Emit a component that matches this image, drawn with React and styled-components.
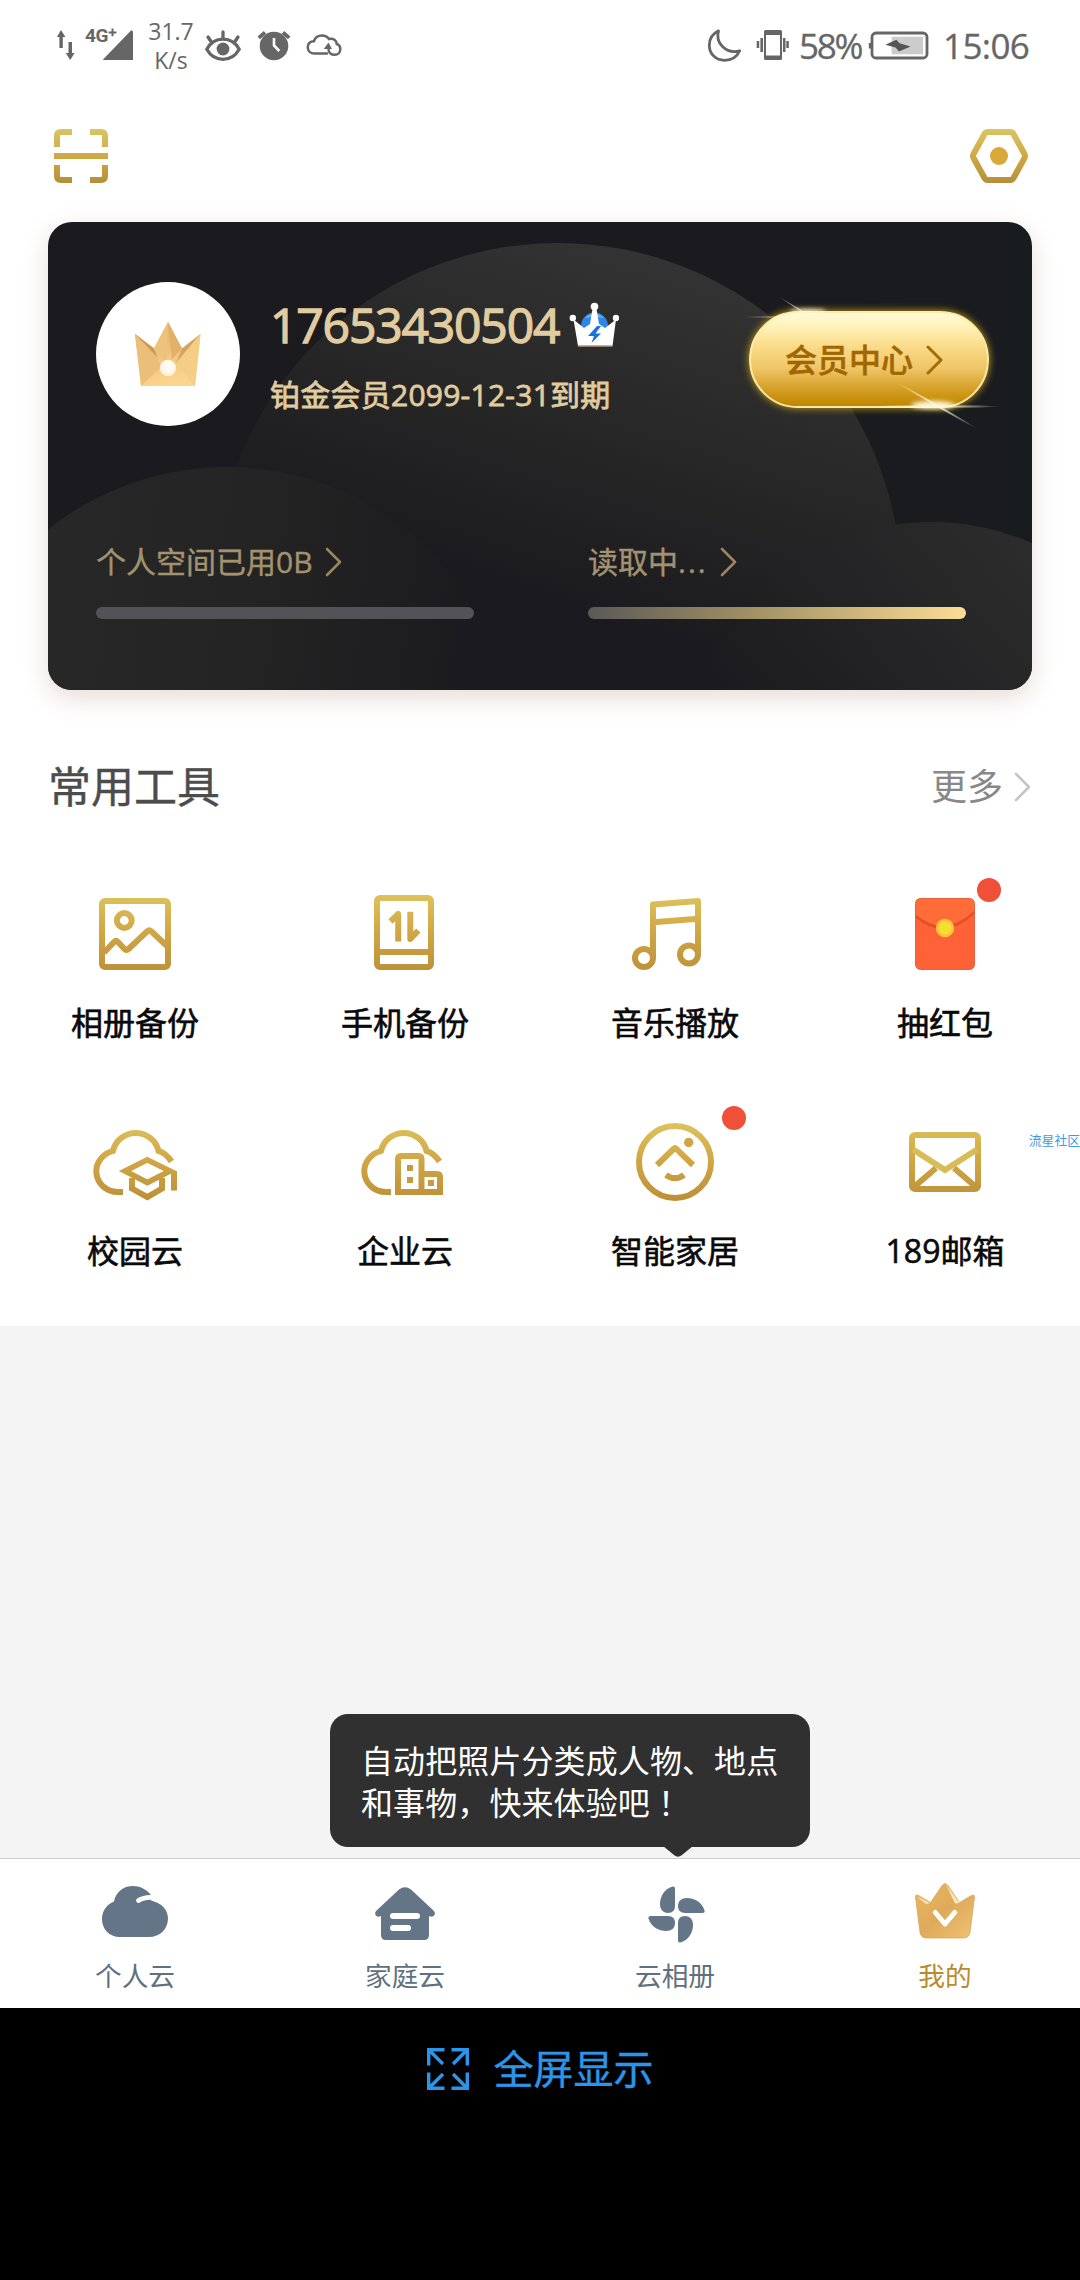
import React from "react";
import styled, { createGlobalStyle } from "styled-components";

const GlobalStyle = createGlobalStyle`
    * {
        box-sizing: border-box;
    }
    body {
        margin: 0;
        background: #000;
        font-family: "Open Sans", "Noto Sans CJK SC", sans-serif;
    }
    svg {
        display: block;
        flex-shrink: 0;
    }
`;

const GoldDefs = () => (
    <DefsSvg width="0" height="0">
        <defs>
            <linearGradient id="gold" gradientUnits="userSpaceOnUse" x1="0" y1="22" x2="0" y2="98">
                <stop offset="0" stopColor="#dcc25c" />
                <stop offset="0.5" stopColor="#d0a544" />
                <stop offset="1" stopColor="#bd9038" />
            </linearGradient>
            <linearGradient id="goldSmall" gradientUnits="userSpaceOnUse" x1="0" y1="0" x2="0" y2="54">
                <stop offset="0" stopColor="#dac463" />
                <stop offset="0.5" stopColor="#cfa945" />
                <stop offset="1" stopColor="#b58f38" />
            </linearGradient>
        </defs>
    </DefsSvg>
);

const Chevron = ({ width, height, color, stroke = 2.6 }) => (
    <svg width={width} height={height} fill="none" stroke={color} strokeWidth={stroke} strokeLinecap="round" strokeLinejoin="round">
        <path d={`M2 2L${width - 2} ${height / 2}L2 ${height - 2}`} />
    </svg>
);

const StatusBar = () => (
    <StatusBarBlock>
        <StatusGroup>
            <svg width="18" height="36" fill="#666">
                <path d="M4 2L8.4 9H5.8V20H2.4V9H-.2Z" />
                <path d="M13.2 32L8.8 25H11.5V14H15V25H17.6Z" />
            </svg>
            <StatusItem $left={8}>
                <svg width="51" height="52" viewBox="-2 -8 51 52" fill="#666">
                    <path d="M18 31.5L46 2.5Q48 2 48 4V32H18.5Z" />
                    <text x="0" y="14" fontFamily="Roboto" fontWeight="700" fontSize="19" letterSpacing="-0.3">4G</text>
                    <path d="M23.6 4.4H31.4M27.5 .5V8.3" stroke="#666" strokeWidth="2" />
                </svg>
            </StatusItem>
            <NetSpeed>
                <span>31.7</span>
                <span>K/s</span>
            </NetSpeed>
            <StatusItem $left={10}>
                <svg width="36" height="36" fill="none" stroke="#666" strokeWidth="3.3" strokeLinecap="round">
                    <path d="M1.8 21.3C5.5 14.5 11.3 11.2 18 11.2S30.5 14.5 34.2 21.3C30.5 28 24.7 31.3 18 31.3S5.5 28 1.8 21.3Z" />
                    <circle cx="18" cy="21" r="6.4" fill="#666" stroke="none" />
                    <path d="M18 4V10M3 9L6 13.5M33 9L30 13.5" />
                </svg>
            </StatusItem>
            <StatusItem $left={16}>
                <svg width="34" height="36" fill="none">
                    <circle cx="17" cy="18" r="14.3" fill="#666" />
                    <path d="M1.8 9.8L8 4.3M32.2 9.8L26 4.3" stroke="#666" strokeWidth="3.6" />
                    <path d="M17 10V17.5L22.3 23" stroke="#fff" strokeWidth="2.6" />
                </svg>
            </StatusItem>
            <StatusItem $left={15}>
                <svg width="36" height="36" fill="none" stroke="#666" strokeWidth="2.5" strokeLinecap="round">
                    <path d="M21 25.5H8.500C4.5 25.5 1.7 23 1.7 19.3C1.7 15.5 4.5 13 8 13.2C9 9.5 12 7.5 16 7.5C19 7.5 21.5 8.8 23 11C27.5 10 30.5 12.5 30.8 16C33.5 16.8 34.3 19 34.3 21C34.3 24.5 32 26.8 28.8 26.8C25 26.8 22.5 24.5 22.5 21V18" />
                    <path d="M17.8 21L22.5 14.5L26 21Z" fill="#666" stroke="none" />
                </svg>
            </StatusItem>
        </StatusGroup>
        <StatusGroup>
            <svg width="36" height="36" fill="none" stroke="#666" strokeWidth="2.8" strokeLinejoin="round">
                <path d="M11.5 2.8C5 6 2.3 11 2.3 17.2C2.3 26 9 32.3 17.5 32.3C24.5 32.3 30 29 32.7 22.8C26.5 24.5 20 23 15.5 18.5C11 14 10 8 11.5 2.8Z" />
            </svg>
            <StatusItem $left={13}>
                <svg width="34" height="36" fill="#666">
                    <path fillRule="evenodd" d="M9.5 2H24.5Q26 2 26 3.5V30.5Q26 32 24.5 32H9.5Q8 32 8 30.5V3.5Q8 2 9.5 2ZM10 7V27.5H24V7Z" />
                    <path d="M4.4 10H7V24H4.4ZM.7 13H3.2V20H.7ZM27 10H29.5V24H27ZM30.3 13H32.8V20H30.3Z" />
                </svg>
            </StatusItem>
            <StatusText $width={62} $left={9} $spacing={-2.2}>58%</StatusText>
            <StatusItem $left={7}>
                <svg width="61" height="36">
                    <rect x="4" y="5" width="55" height="25" rx="4" fill="#fff" stroke="#666" strokeWidth="2.8" />
                    <path d="M.8 15H3V20.5H.8Z" fill="#666" />
                    <rect x="23.6" y="8.7" width="31.5" height="17.6" fill="#ccc" />
                    <path d="M17.4 16.8L28.4 11.7L31.5 15.3L42.5 18.5L31 23.5L27.5 19.5Z" fill="#555" />
                </svg>
            </StatusItem>
            <StatusText $width={86} $left={14} $spacing={-0.6}>15:06</StatusText>
        </StatusGroup>
    </StatusBarBlock>
);

const ScanIcon = () => (
    <svg width="54" height="54" fill="none" stroke="url(#goldSmall)" strokeWidth="6">
        <path d="M3 18V7Q3 3 7 3H18M36 3H47Q51 3 51 7V18M51 36V47Q51 51 47 51H36M18 51H7Q3 51 3 47V36M0 27H54" />
    </svg>
);

const SettingIcon = () => (
    <svg width="58" height="54" fill="none">
        <path
            d="M17.5 3H40.5Q42.5 3 43.5 5L54.5 25Q55.5 27 54.5 29L43.5 49Q42.5 51 40.5 51H17.5Q15.5 51 14.5 49L3.5 29Q2.5 27 3.5 25L14.5 5Q15.5 3 17.5 3Z"
            stroke="url(#goldSmall)"
            strokeWidth="6"
        />
        <circle cx="29" cy="27" r="9" fill="#d8a838" />
    </svg>
);

const CardBackdrop = () => (
    <Backdrop viewBox="48 222 984 468">
        <defs>
            <linearGradient id="orbTop" x1="0.58" y1="0" x2="0.42" y2="0.5">
                <stop offset="0" stopColor="#333" />
                <stop offset="0.5" stopColor="#272727" />
                <stop offset="1" stopColor="#1b1a1e" />
            </linearGradient>
            <linearGradient id="orbLeft" x1="0.15" y1="0" x2="0.95" y2="0.1">
                <stop offset="0" stopColor="#282828" />
                <stop offset="0.5" stopColor="#242424" />
                <stop offset="1" stopColor="#1b1a1e" />
            </linearGradient>
            <linearGradient id="orbRight" x1="0.65" y1="0" x2="0.15" y2="0.45">
                <stop offset="0" stopColor="#2c2c2c" />
                <stop offset="1" stopColor="#1b1a1e" />
            </linearGradient>
        </defs>
        <circle cx="558" cy="586" r="343" fill="url(#orbTop)" />
        <circle cx="227" cy="755" r="288" fill="url(#orbLeft)" />
        <circle cx="932" cy="768" r="246" fill="url(#orbRight)" />
    </Backdrop>
);

const AvatarCrown = () => (
    <svg width="68" height="66" viewBox="134 320 68 66">
        <defs>
            <linearGradient id="crownFace" x1="0" y1="0" x2="0.3" y2="1">
                <stop offset="0" stopColor="#dfaa62" />
                <stop offset="1" stopColor="#fbd58d" />
            </linearGradient>
        </defs>
        <path d="M135 333L154 347.5L168 321L182 347.5L200.5 333L195 385H141Z" fill="url(#crownFace)" />
        <path d="M135 333L154 347.5L161 366L141 385Z" fill="#ebbf77" />
        <path d="M135 333L154 347.5L157 356Z" fill="#cf9955" />
        <path d="M168 321L182 347.5L172 358Z" fill="#e2b069" />
        <path d="M168 321L154 347.5L166 362Z" fill="#edc27b" />
        <path d="M200.5 333L182 347.5L176 362Z" fill="#d2a461" />
        <path d="M200.5 333L176 362L195 385Z" fill="#f6cd84" />
        <circle cx="168" cy="367" r="8.2" fill="#fdf1dc" />
        <circle cx="168" cy="365.5" r="6.5" fill="#fffaf0" />
    </svg>
);

const PlatinumBadge = () => (
    <svg width="50" height="46" viewBox="570 302 50 46">
        <circle cx="595.5" cy="326" r="13.500" fill="#2f86e6" />
        <path d="M586 318Q595 309 605 318L598 317H592Z" fill="#69b5f7" />
        <path d="M593.5 309H597.5L600 324L606 328L617 319.5L613.5 346H579L574.5 319.5L585 328L591 324Z" fill="#fff" />
        <path d="M579 346H613.5" stroke="#b8957c" strokeWidth="1.5" />
        <circle cx="595.5" cy="306.5" r="3.8" fill="#fff" />
        <circle cx="573.8" cy="318" r="3.2" fill="#fff" />
        <circle cx="617" cy="318" r="3.2" fill="#fff" />
        <path d="M598 326L589 336H595L592.5 343L602 333.5H596.5L602 326Z" fill="#1674e0" />
    </svg>
);

const ButtonSparks = () => (
    <Sparks viewBox="729 291 280 143">
        <defs>
            <filter id="soft" x="-50%" y="-300%" width="200%" height="700%">
                <feGaussianBlur stdDeviation="2.2" />
            </filter>
            <radialGradient id="ray">
                <stop offset="0" stopColor="#fff8dc" />
                <stop offset="1" stopColor="#fff8dc" stopOpacity="0" />
            </radialGradient>
        </defs>
        <g fill="#fff8d8" filter="url(#soft)">
            <ellipse cx="808" cy="311" rx="18" ry="2" />
            <ellipse cx="933" cy="405" rx="22" ry="4" />
        </g>
        <g fill="url(#ray)">
            <ellipse cx="935" cy="406.5" rx="65" ry="2" />
            <ellipse cx="936" cy="405" rx="46" ry="1.6" transform="rotate(30 936 405)" />
            <ellipse cx="780" cy="317" rx="40" ry="1.2" opacity="0.5" />
            <ellipse cx="800" cy="310" rx="24" ry="1.2" opacity="0.7" transform="rotate(32 800 310)" />
        </g>
    </Sparks>
);

const PhotoIcon = () => (
    <GoldIcon>
        <rect x="27" y="27" width="66" height="66" rx="3" />
        <circle cx="49.3" cy="46.5" r="7.4" />
        <path d="M29 78.5L39 68Q41 66 43 68L49.5 75Q51.5 77 53.5 75L72 57.5Q74.3 55.5 76.5 57.5L92 72" />
    </GoldIcon>
);

const PhoneIcon = () => (
    <GoldIcon>
        <rect x="32" y="24" width="54" height="69" rx="3" />
        <path d="M32 78H86" />
        <path d="M45.5 47.5L53.2 40V67.5M65.3 37.7V65L73.3 56.5" strokeLinejoin="round" />
    </GoldIcon>
);

const MusicIcon = () => (
    <GoldIcon>
        <circle cx="29" cy="84" r="9" />
        <circle cx="74" cy="80.5" r="9" />
        <path d="M38 84V30.5L83 27V80.5M38 48.3L83 44.8" strokeLinejoin="round" />
    </GoldIcon>
);

const RedPacketIcon = () => (
    <svg width="120" height="120">
        <rect x="30.5" y="24.5" width="59" height="71" rx="5" fill="#ff6237" stroke="#e8613f" />
        <path d="M31 44Q60 68 89 40V29Q89 25 85 25H35Q31 25 31 29Z" fill="#e2502c" />
        <path d="M31 41Q60 64 89 37V29Q89 25 85 25H35Q31 25 31 29Z" fill="#ff6c38" />
        <circle cx="60" cy="54" r="9.2" fill="#f6c53a" />
        <circle cx="60" cy="54" r="6.5" fill="#f8dc30" />
    </svg>
);

const cloudPath = "M96.5 59.5Q91 51 83.5 48.8A23.4 23.4 0 0 0 38 48.8C28 51.5 21.3 60 21.3 69C21.3 81 31 90 43 90H48";

const CampusIcon = () => (
    <GoldIcon>
        <path d={cloudPath} />
        <path d="M50 69L72.3 57.8L95 69L72.3 80.5Z" strokeWidth="5.6" />
        <path d="M57 76V86.5L72.3 95L87 86.5V76M99 69V88.5" />
    </GoldIcon>
);

const CompanyIcon = () => (
    <GoldIcon>
        <path d={cloudPath} transform="translate(-2 0)" />
        <path d="M53 90V57Q53 54 56 54H73.5Q76.5 54 76.5 57V90ZM76.5 72H92Q95 72 95 75V90H76.5" />
        <path d="M62 63H68V69H62ZM62 75H68V81H62ZM83 78H89V84H83Z" fill="#c99a40" stroke="none" />
    </GoldIcon>
);

const SmartHomeIcon = () => (
    <GoldIcon>
        <circle cx="60" cy="60" r="36" />
        <path d="M42 63L58.5 47Q60 45.5 61.5 47L78 63M51 72.8Q60 79.5 69 72.8" />
        <circle cx="73.7" cy="40.5" r="4.7" fill="#d0a544" stroke="none" />
    </GoldIcon>
);

const MailIcon = () => (
    <GoldIcon>
        <rect x="27" y="33" width="66" height="54" rx="3" />
        <path d="M29 85L51 66M91 85L69 66" />
        <path d="M28 47.5L60 68L92 47.5" stroke="#d8bc55" />
    </GoldIcon>
);

const CloudTabIcon = () => (
    <svg width="80" height="80">
        <path
            d="M25 65C14 65 7 57 7 47C7 39 12 32 19 29.5C21 20 28 14 38 14C45 14 51 17 55.5 22.5L56 28.5C67 31 73 38 73 46.5C73 57 65 65 54 65Z"
            fill="#637587"
        />
        <path d="M43.5 28.5Q49.5 24.500 59 25.5" fill="none" stroke="#fff" strokeWidth="4.8" strokeLinecap="round" />
    </svg>
);

const HomeTabIcon = () => (
    <svg width="80" height="80">
        <path
            d="M34 17.5Q40 12.8 46 17.5L69 39Q71 42 68.5 44Q66.5 45.5 64 44V63Q64 68 59 68H21Q16 68 16 63V44Q13.5 45.5 11.5 44Q9 42 11 39Z"
            fill="#637587"
        />
        <path d="M28 44H52M28 56H43" stroke="#fff" strokeWidth="6" strokeLinecap="round" />
    </svg>
);

const AlbumTabIcon = () => (
    <svg width="80" height="80" fill="#637587">
        {[0, 90, 180, 270].map((angle) => (
            <path
                key={angle}
                d="M40 16.5Q40 14 37.5 14.5C29 17 25 25 25 32C25 37.5 28 41 33 41Q40 41 40 34Z"
                transform={`rotate(${angle} 41.5 42.5)`}
            />
        ))}
    </svg>
);

const MineTabIcon = () => (
    <svg width="80" height="80">
        <defs>
            <linearGradient id="mineCrown" x1="0" y1="0" x2="1" y2="1">
                <stop offset="0" stopColor="#ecb862" />
                <stop offset="0.5" stopColor="#dea95a" />
                <stop offset="1" stopColor="#f0c374" />
            </linearGradient>
        </defs>
        <path
            d="M10.5 25Q10.5 22 13.5 23.5L25.5 30.5L37.5 13Q40 10 42.5 13L54.5 30.5L66.5 23.5Q69.5 22 69.5 25L65 60.5Q64 66 58.5 66H21.5Q16 66 15 60.5Z"
            fill="url(#mineCrown)"
            stroke="#d9a75c"
            strokeWidth="0.8"
        />
        <path d="M41 12.5L54.5 31L50 31.5Z" fill="#fbe6b8" />
        <path d="M12 24.5L25 31L21 32Z" fill="#fbe6b8" />
        <path d="M30.3 40.5L40 52L49.7 40.5" fill="none" stroke="#fff" strokeWidth="5" strokeLinecap="round" strokeLinejoin="round" />
    </svg>
);

const FullScreenIcon = () => (
    <svg width="42" height="42" fill="none" stroke="#2b95e9" strokeWidth="3.4">
        <path d="M17.5 1.7H1.7V17.5M2 2L16 16M24.5 1.7H40.3V17.5M40 2L26 16M17.5 40.3H1.7V24.5M2 40L16 26M24.5 40.3H40.3V24.5M40 40L26 26" />
    </svg>
);

const tools = [
    { name: "相册备份", icon: PhotoIcon },
    { name: "手机备份", icon: PhoneIcon },
    { name: "音乐播放", icon: MusicIcon },
    { name: "抽红包", icon: RedPacketIcon, dot: 92 },
    { name: "校园云", icon: CampusIcon },
    { name: "企业云", icon: CompanyIcon },
    { name: "智能家居", icon: SmartHomeIcon, dot: 107 },
    { name: "189邮箱", icon: MailIcon },
];

const tabs = [
    { name: "个人云", icon: CloudTabIcon },
    { name: "家庭云", icon: HomeTabIcon },
    { name: "云相册", icon: AlbumTabIcon },
    { name: "我的", icon: MineTabIcon, active: true },
];

const App = () => {
    return (
        <Page>
            <GlobalStyle />
            <GoldDefs />
            <Main>
                <StatusBar />
                <Header>
                    <ScanIcon />
                    <SettingIcon />
                </Header>
                <MemberCard>
                    <CardBackdrop />
                    <Profile>
                        <Avatar>
                            <AvatarCrown />
                        </Avatar>
                        <UserInfo>
                            <UserName>
                                <span>17653430504</span>
                                <PlatinumBadge />
                            </UserName>
                            <Expire>铂金会员2099-12-31到期</Expire>
                        </UserInfo>
                        <MemberButton>
                            <ButtonSparks />
                            <span>会员中心</span>
                            <Chevron width={17} height={30} color="#a26c06" stroke={3} />
                        </MemberButton>
                    </Profile>
                    <Storage>
                        <div>
                            <StorageTitle>
                                <span>个人空间已用0B</span>
                                <Chevron width={17} height={30} color="#9c8660" />
                            </StorageTitle>
                            <StorageBar />
                        </div>
                        <div>
                            <StorageTitle>
                                <span>
                                    读取中<Dots>...</Dots>
                                </span>
                                <Chevron width={17} height={30} color="#9c8660" />
                            </StorageTitle>
                            <StorageBar $loading />
                        </div>
                    </Storage>
                </MemberCard>
                <SectionHead>
                    <h2>常用工具</h2>
                    <More>
                        更多
                        <Chevron width={17} height={30} color="#c4c4c4" />
                    </More>
                </SectionHead>
                <ToolGrid>
                    {tools.map(({ name, icon: Icon, dot }) => (
                        <Tool key={name}>
                            <Icon />
                            {dot && <RedDot $left={dot} />}
                            <span>{name}</span>
                        </Tool>
                    ))}
                </ToolGrid>
                <Watermark>流星社区</Watermark>
            </Main>
            <Blank>
                <Tooltip>
                    自动把照片分类成人物、地点
                    <br />
                    和事物，快来体验吧<Exclamation>！</Exclamation>
                    <TooltipArrow width="30" height="12">
                        <path d="M0 0H30L19 9Q15 12.5 11 9Z" fill="#303030" />
                    </TooltipArrow>
                </Tooltip>
            </Blank>
            <TabBar>
                {tabs.map(({ name, icon: Icon, active }) => (
                    <Tab key={name} $active={active}>
                        <Icon />
                        <span>{name}</span>
                    </Tab>
                ))}
            </TabBar>
            <FullScreen>
                <FullScreenIcon />
                <span>全屏显示</span>
            </FullScreen>
        </Page>
    );
};

const DefsSvg = styled.svg`
    position: absolute;
`;

const Page = styled.div`
    width: 1080px;
    height: 2280px;
    display: flex;
    flex-direction: column;
    overflow: hidden;
    background: #000;
`;

const Main = styled.div`
    position: relative;
    height: 1326px;
    background: #fff;
`;

const StatusBarBlock = styled.div`
    height: 92px;
    padding: 0 51px 0 57px;
    display: flex;
    justify-content: space-between;
    align-items: center;
    color: #666;
`;

const StatusGroup = styled.div`
    display: flex;
    align-items: center;
`;

const StatusItem = styled.div`
    margin-left: ${(props) => props.$left}px;
`;

const NetSpeed = styled.div`
    width: 48px;
    margin-left: 13px;
    display: flex;
    flex-direction: column;
    align-items: center;
    font-size: 23px;
    line-height: 29px;
`;

const StatusText = styled.div`
    width: ${(props) => props.$width}px;
    margin-left: ${(props) => props.$left}px;
    font-size: 35px;
    line-height: 48px;
    letter-spacing: ${(props) => props.$spacing}px;
    white-space: nowrap;
    -webkit-text-stroke: 0.3px #666;
`;

const Header = styled.div`
    height: 130px;
    padding: 37px 52px 0 54px;
    display: flex;
    justify-content: space-between;
`;

const MemberCard = styled.div`
    position: relative;
    height: 468px;
    margin: 0 48px;
    padding: 60px 43px 0 48px;
    border-radius: 24px;
    background: linear-gradient(90deg, #1b1a1e 60%, #191c1e);
    box-shadow: 0 8px 26px rgba(130, 80, 50, 0.2);
`;

const Backdrop = styled.svg`
    position: absolute;
    left: 0;
    top: 0;
    width: 984px;
    height: 468px;
    border-radius: 24px;
`;

const Profile = styled.div`
    position: relative;
    height: 144px;
    display: flex;
    align-items: flex-start;
`;

const Avatar = styled.div`
    width: 144px;
    height: 144px;
    display: flex;
    align-items: center;
    justify-content: center;
    border-radius: 50%;
    background: #fff;
`;

const UserInfo = styled.div`
    margin: 18px 0 0 30px;
    color: #e0cc9f;
`;

const UserName = styled.div`
    height: 50px;
    display: flex;
    align-items: center;
    gap: 10px;
    font-size: 48px;
    line-height: 50px;
    letter-spacing: -1.15px;
    -webkit-text-stroke: 1.3px #e0cc9f;
`;

const Expire = styled.div`
    margin-top: 25px;
    font-size: 30px;
    line-height: 40px;
    letter-spacing: 0.25px;
    -webkit-text-stroke: 0.8px #e0cc9f;
`;

const MemberButton = styled.div`
    position: relative;
    width: 240px;
    height: 97px;
    margin: 29px 0 0 auto;
    padding-left: 34px;
    display: flex;
    align-items: center;
    gap: 13px;
    border: 2px solid #ffe9a4;
    border-radius: 49px;
    background: linear-gradient(180deg, #fffbd6 0%, #fff2b8 15%, #fbdc8a 35%, #eec566 60%, #d09a1c 85%, #c08600 100%);
    box-shadow: 0 0 7px 1px #a98a1e;
    color: #a26600;
    font-size: 32px;
    line-height: 40px;
    font-weight: 500;
    -webkit-text-stroke: 0.5px #a26600;
`;

const Sparks = styled.svg`
    position: absolute;
    left: -22px;
    top: -22px;
    width: 280px;
    height: 143px;
`;

const Storage = styled.div`
    position: relative;
    margin-top: 116px;
    display: grid;
    grid-template-columns: 378px 378px;
    column-gap: 114px;
`;

const StorageTitle = styled.div`
    display: flex;
    align-items: center;
    gap: 12px;
    color: #a39270;
    font-size: 30px;
    line-height: 40px;
    -webkit-text-stroke: 0.4px #a39270;
`;

const Dots = styled.span`
    letter-spacing: 2px;
`;

const StorageBar = styled.div`
    height: 12px;
    margin-top: 25px;
    border-radius: 6px;
    background: ${(props) => (props.$loading ? "linear-gradient(90deg, #5a5957, #a39365 45%, #fddd94)" : "#535256")};
`;

const SectionHead = styled.div`
    height: 86px;
    margin: 54px 49px 44px 48px;
    display: flex;
    align-items: center;
    justify-content: space-between;
    h2 {
        margin: 0;
        color: #4c4c4c;
        font-size: 43px;
        line-height: 60px;
        font-weight: 400;
        -webkit-text-stroke: 0.4px #4c4c4c;
    }
`;

const More = styled.div`
    display: flex;
    align-items: center;
    gap: 11px;
    color: #888;
    font-size: 36px;
    line-height: 50px;
`;

const ToolGrid = styled.div`
    display: grid;
    grid-template-columns: repeat(4, 270px);
    row-gap: 59px;
`;

const Tool = styled.div`
    position: relative;
    display: flex;
    flex-direction: column;
    align-items: center;
    gap: 9px;
    color: #0a0a0a;
    font-size: 32px;
    line-height: 40px;
    -webkit-text-stroke: 0.6px #0a0a0a;
`;

const GoldIcon = styled.svg.attrs({
    width: 120,
    height: 120,
    fill: "none",
    stroke: "url(#gold)",
    strokeWidth: 6,
})``;

const RedDot = styled.i`
    position: absolute;
    left: ${(props) => props.$left + 75}px;
    top: 4px;
    width: 24px;
    height: 24px;
    border-radius: 50%;
    background: #f04f38;
`;

const Watermark = styled.div`
    position: absolute;
    right: 0;
    top: 1130px;
    color: #3d9bea;
    font-size: 12.8px;
    line-height: 20px;
`;

const Blank = styled.div`
    height: 532px;
    padding: 388px 0 0 330px;
    background: #f4f4f4;
`;

const Tooltip = styled.div`
    position: relative;
    width: 480px;
    height: 133px;
    padding: 26px 0 0 31px;
    border-radius: 18px;
    background: #303030;
    color: #fff;
    font-size: 32px;
    line-height: 42px;
    letter-spacing: 0.1px;
    white-space: nowrap;
`;

const Exclamation = styled.span`
    font-family: "Noto Sans CJK TC", sans-serif;
    line-height: 1;
`;

const TooltipArrow = styled.svg`
    position: absolute;
    left: 333px;
    top: 132px;
`;

const TabBar = styled.div`
    height: 150px;
    padding-top: 13px;
    display: grid;
    grid-template-columns: repeat(4, 270px);
    border-top: 1px solid #ccc;
    background: #fff;
`;

const Tab = styled.div`
    display: flex;
    flex-direction: column;
    align-items: center;
    gap: 6px;
    color: ${(props) => (props.$active ? "#b98c2b" : "#5f7080")};
    font-size: 26.7px;
    line-height: 36px;
`;

const FullScreen = styled.div`
    height: 122px;
    display: flex;
    align-items: center;
    justify-content: center;
    gap: 25px;
    color: #2b95e9;
    font-size: 40px;
    line-height: 50px;
    -webkit-text-stroke: 0.4px #2b95e9;
`;

export default App;
